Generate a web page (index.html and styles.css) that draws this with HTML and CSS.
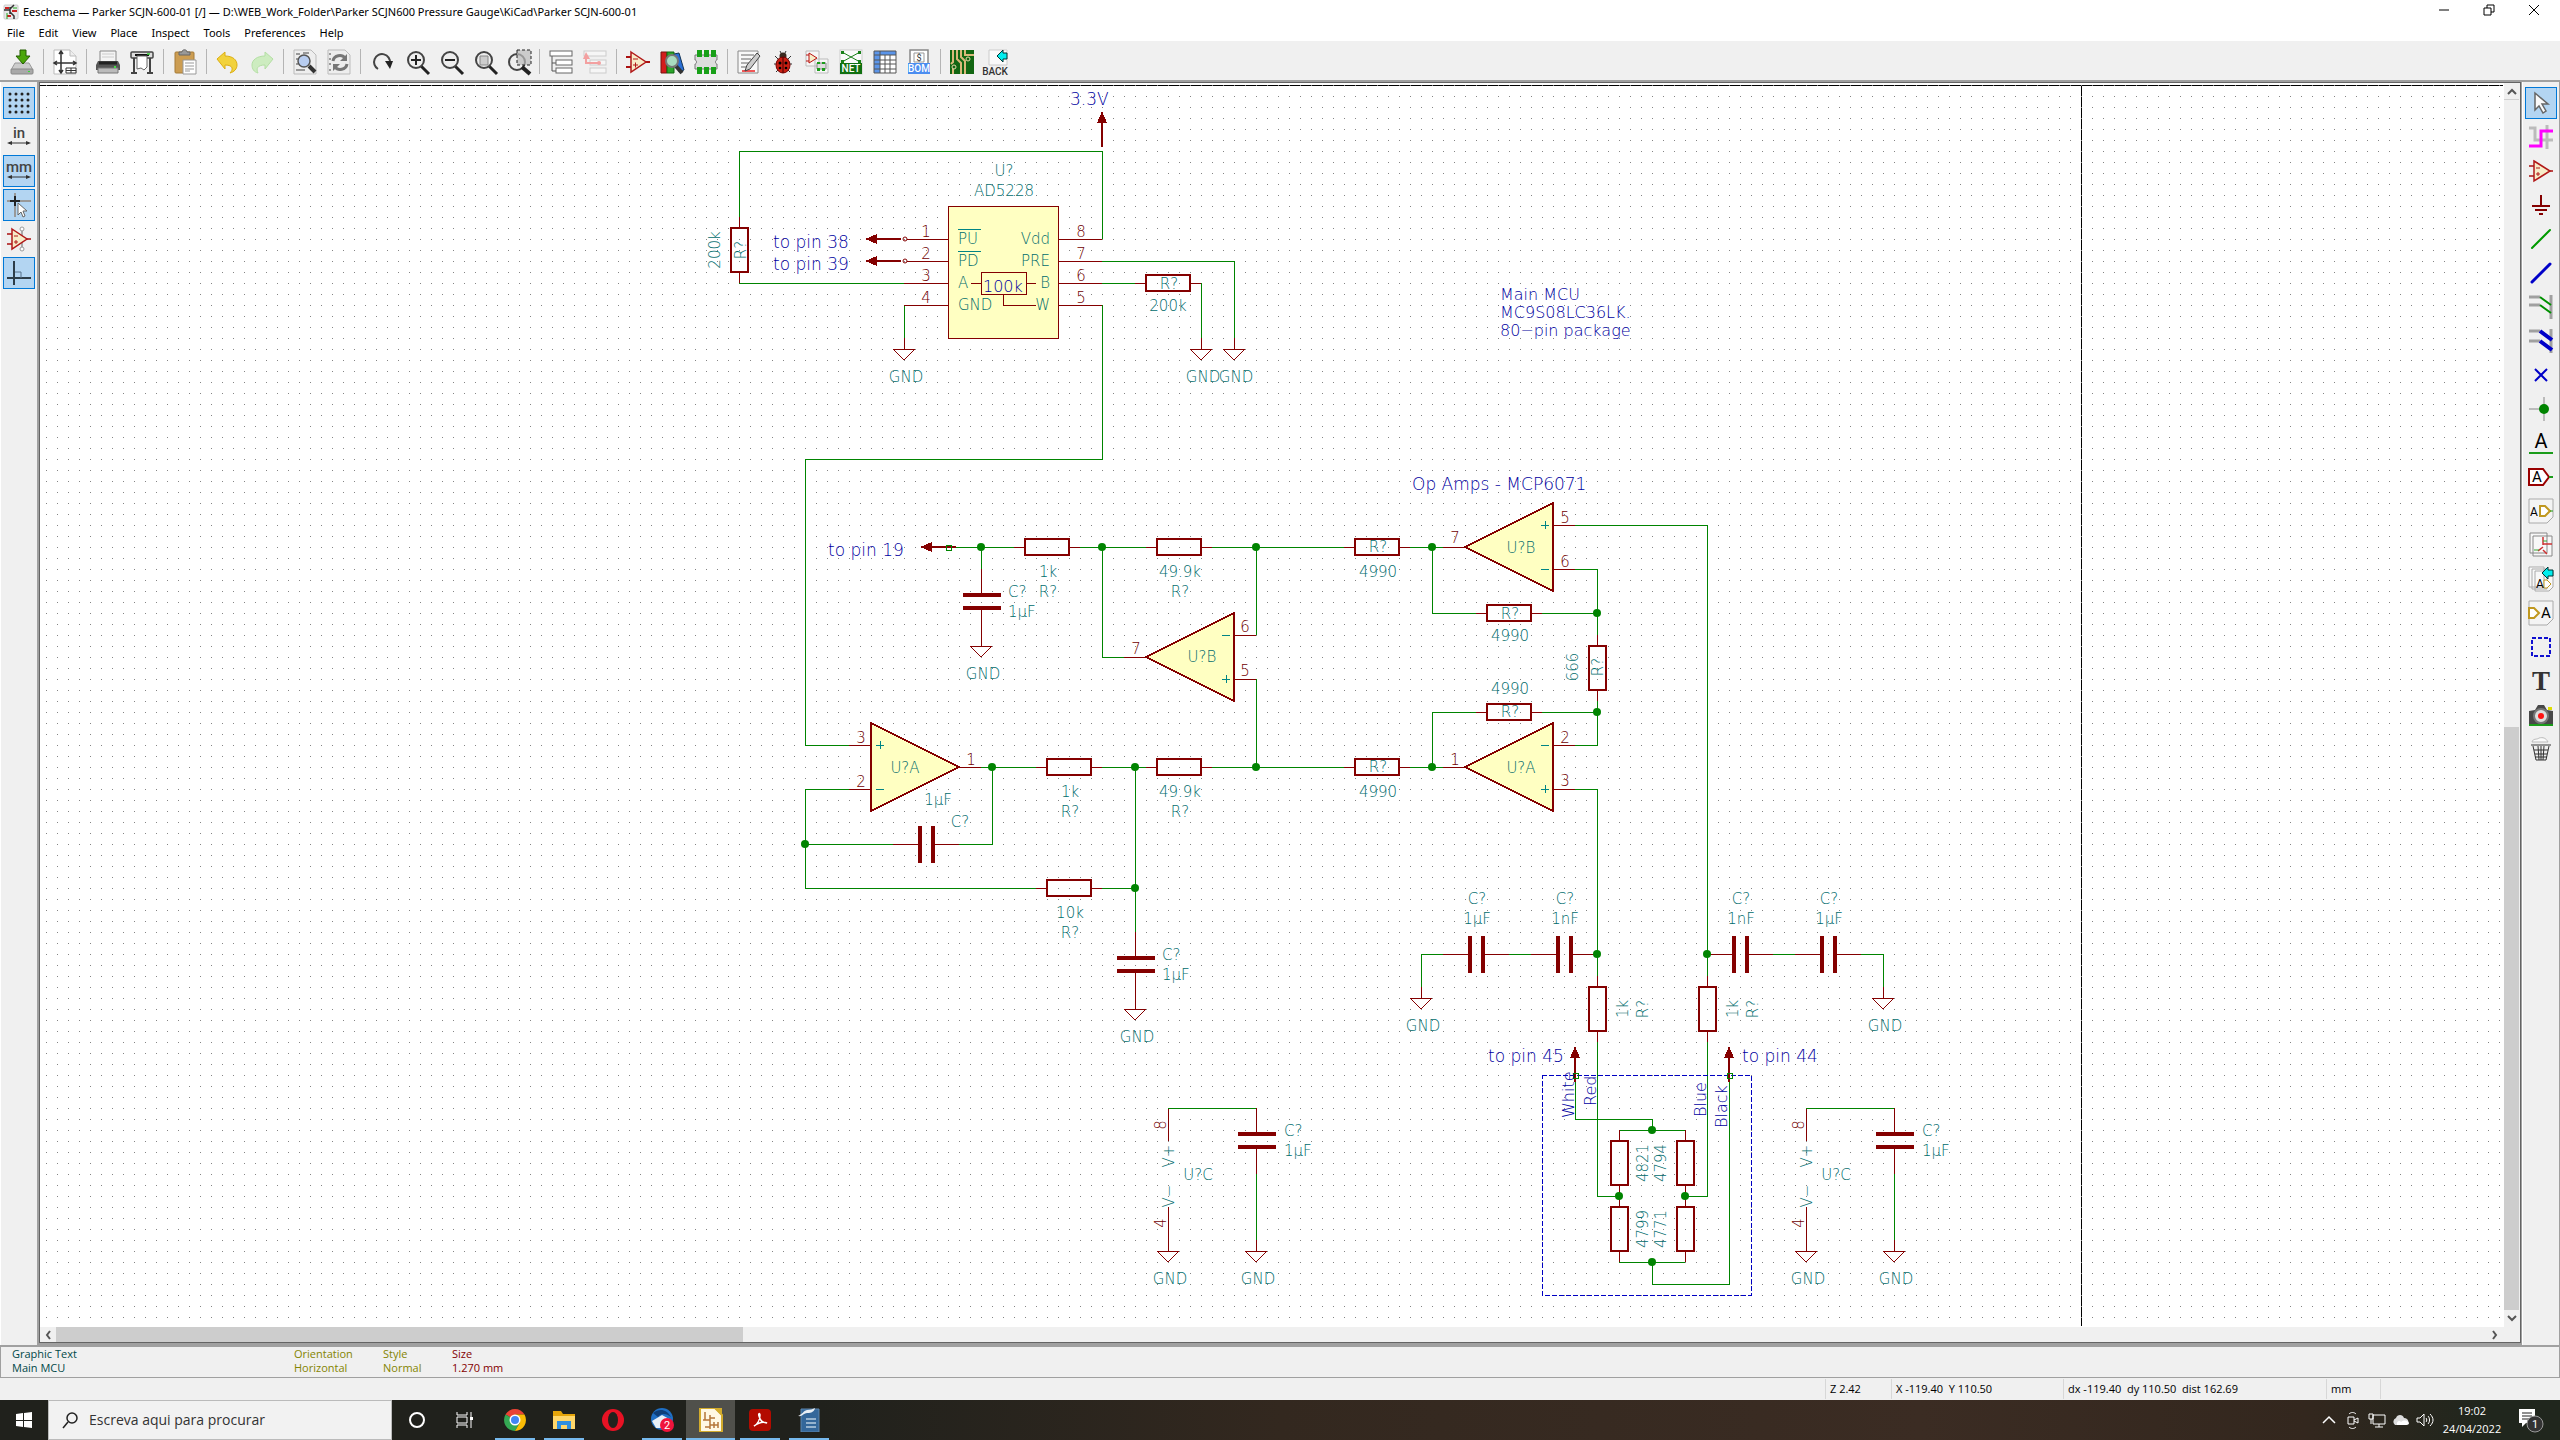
FILE: index.html
```
<!DOCTYPE html>
<html lang="en">
<head>
<meta charset="utf-8">
<title>Eeschema — Parker SCJN-600-01</title>
<link rel="stylesheet" href="styles.css">
</head>
<body>
<header class="titlebar">
  <svg class="app-icon" viewBox="0 0 16 16"><rect x="1" y="1" width="14" height="14" rx="1" fill="#e8e8e8" stroke="#ccc"/><path d="M1 6h6M7 3v7M7 8l4 4v3M7 5l4-4" stroke="#333" fill="none" stroke-width="1.5"/><path d="M2 4h4M9 7h5M4 12h4" stroke="#c22" stroke-width="2"/><path d="M10 4h4M4 9v6" stroke="#2a2"/></svg>
  <h1 class="title">Eeschema — Parker SCJN-600-01 [/] — D:\WEB_Work_Folder\Parker SCJN600 Pressure Gauge\KiCad\Parker SCJN-600-01</h1>
  <div class="window-controls">
    <button aria-label="Minimize"><svg viewBox="0 0 12 12"><path d="M1 6h10" stroke="#000"/></svg></button>
    <button aria-label="Restore"><svg viewBox="0 0 12 12"><path d="M1 4h7v7H1zM4 4V1h7v7H8" fill="none" stroke="#000"/></svg></button>
    <button aria-label="Close"><svg viewBox="0 0 12 12"><path d="M1 1l10 10M11 1L1 11" stroke="#000"/></svg></button>
  </div>
</header>
<nav class="menubar">
  <button>File</button><button>Edit</button><button>View</button><button>Place</button><button>Inspect</button><button>Tools</button><button>Preferences</button><button>Help</button>
</nav>

<div class="toolbar" role="toolbar" aria-label="Main">
  <button aria-label="Save"><svg viewBox="0 0 24 24"><path d="M5 13h14l4 7H1z" fill="#ccc" stroke="#999"/><rect x="1" y="19" width="22" height="5" rx="1" fill="#a9a9a9" stroke="#888"/><path d="M18 21.500h2" stroke="#3d3"/><path d="M10 0h6v6h4l-7 8-7-8h4z" fill="#4ba60a" stroke="#245c00"/></svg></button>
  <i class="sep"></i>
  <button aria-label="Page settings"><svg viewBox="0 0 24 24"><path d="M1 0h16l6 6v18H1z" fill="#fff" stroke="#bbb"/><path d="M17 0v6h6" fill="#eee" stroke="#bbb"/><path d="M8 2v20M2 13h20M6 4l2-3 2 3M6 20l2 3 2-3M4 11l-3 2 3 2M20 11l3 2-3 2" fill="none" stroke="#333" stroke-width="1.500"/><path d="M13 18h10v5H13zM13 20.500h10M18 18v5" fill="#fff" stroke="#333"/></svg></button>
  <i class="sep"></i>
  <button aria-label="Print"><svg viewBox="0 0 24 24"><path d="M4 1h16v12H4z" fill="#f4f4f4" stroke="#888"/><path d="M6 4h12M6 7h12" stroke="#ccc"/><path d="M2 11h20l2 4v5H0v-5z" fill="#555"/><path d="M3 13h18" stroke="#222" stroke-width="3"/><path d="M2 18h20v5H2z" fill="#bbb" stroke="#777"/><path d="M18 17h2" stroke="#4d4" stroke-width="2"/></svg></button>
  <button aria-label="Plot"><svg viewBox="0 0 24 24"><rect x="1" y="2" width="22" height="6" rx="1" fill="#ddd" stroke="#444" stroke-width="1.500"/><path d="M5 5h14" stroke="#111" stroke-width="2"/><path d="M4 8v15M20 8v15M1 23h6M17 23h6" stroke="#444" stroke-width="2"/><path d="M7 6h10v11l-3 3-3-2-4 1z" fill="#fff" stroke="#666"/><path d="M17 4h3" stroke="#3c3" stroke-width="1.500"/></svg></button>
  <i class="sep"></i>
  <button aria-label="Paste"><svg viewBox="0 0 24 24"><rect x="2" y="2" width="19" height="21" rx="1" fill="#cc9d52" stroke="#a57b36"/><path d="M6 5h11V2h-3c0-3-5-3-5 0H6z" fill="#999" stroke="#666"/><path d="M10 10h13v14H10z" fill="#fff" stroke="#999"/><path d="M12 13h9M12 16h9M12 19h9M12 21h5" stroke="#999"/></svg></button>
  <i class="sep"></i>
  <button aria-label="Undo"><svg viewBox="0 0 24 24"><path d="M1 9l8-7v4c8 0 12 4 12 9 0 4-3 7-7 8 3-3 4-8-5-8v4z" fill="#f2d23c" stroke="#dbae13"/></svg></button>
  <button aria-label="Redo"><svg viewBox="0 0 24 24"><path d="M23 9l-8-7v4C7 6 2 10 2 15c0 4 2 7 6 8-2-4-1-8 7-8v4z" fill="#cdecc0" stroke="#b4dfa4"/></svg></button>
  <i class="sep"></i>
  <button aria-label="Find"><svg viewBox="0 0 24 24"><path d="M1 0h17l5 5v19H1z" fill="#eee" stroke="#bbb"/><path d="M3 4h4M3 9h2M3 14h2M3 20h9M10 3h6" stroke="#999" stroke-width="2"/><path d="M16 16l6 6" stroke="#333" stroke-width="4"/><circle cx="11" cy="11" r="6" fill="#b8cdf0" stroke="#555" stroke-width="1.500"/></svg></button>
  <button aria-label="Find and replace"><svg viewBox="0 0 24 24"><path d="M1 0h17l5 5v19H1z" fill="#eee" stroke="#bbb"/><path d="M2 4h2M2 9h2M2 14h2M2 20h2" stroke="#999" stroke-width="2"/><path d="M6 11c1-6 9-7 12-3M20 14c-1 6-9 7-12 3" fill="none" stroke="#777" stroke-width="3"/><path d="M20 4v7h-7zM6 21v-7h7z" fill="#777"/></svg></button>
  <i class="sep"></i>
  <button aria-label="Refresh"><svg viewBox="0 0 24 24"><path d="M8 19A8 8 0 1 1 20 13" fill="none" stroke="#444" stroke-width="2"/><path d="M15 11h8l-3 8z" fill="#222"/></svg></button>
  <button aria-label="Zoom in"><svg viewBox="-2 0 24 24"><path d="M15 16l8 8" stroke="#222" stroke-width="3"/><circle cx="10" cy="10" r="8" fill="#eee" stroke="#444" stroke-width="2"/><path d="M5 10h10M10 5v10" stroke="#222" stroke-width="2"/></svg></button>
  <button aria-label="Zoom out"><svg viewBox="-2 0 24 24"><path d="M15 16l8 8" stroke="#222" stroke-width="3"/><circle cx="10" cy="10" r="8" fill="#eee" stroke="#444" stroke-width="2"/><path d="M5 10h10" stroke="#222" stroke-width="2"/></svg></button>
  <button aria-label="Zoom to fit"><svg viewBox="-2 0 24 24"><path d="M15 16l8 8" stroke="#222" stroke-width="3"/><circle cx="10" cy="10" r="8" fill="#eee" stroke="#444" stroke-width="2"/><path d="M6 6h8v9H6z" fill="#ccc" stroke="#888"/></svg></button>
  <button aria-label="Zoom to selection"><svg viewBox="-3 0 24 24"><circle cx="8" cy="12" r="8" fill="#eee" stroke="#444" stroke-width="2"/><path d="M8 0h14v15H8z" fill="#bbb" fill-opacity="0.7" stroke="#222" stroke-dasharray="3 2"/><path d="M13 17l8 7" stroke="#222" stroke-width="4"/></svg></button>
  <i class="sep"></i>
  <button aria-label="Hierarchy"><svg viewBox="0 0 24 24"><path d="M3 6v15h4M3 13h4" fill="none" stroke="#555"/><g fill="#fff" stroke="#666"><rect x="1" y="1" width="22" height="5"/><rect x="7" y="10" width="16" height="5"/><rect x="7" y="18" width="16" height="5"/></g></svg></button>
  <button aria-label="Leave sheet"><svg viewBox="0 0 24 24"><g fill="#f6f6f6" stroke="#ccc"><rect x="1" y="1" width="22" height="5"/><rect x="7" y="10" width="16" height="5"/><rect x="7" y="18" width="16" height="5"/></g><path d="M16 13H3V6" fill="none" stroke="#f3a0a0" stroke-width="2"/><path d="M0 9l3-7 4 7z" fill="#f3a0a0"/><circle cx="16" cy="13" r="2" fill="#f3a0a0"/></svg></button>
  <i class="sep"></i>
  <button aria-label="Symbol editor"><svg viewBox="0 0 24 24"><path d="M0 7h5M0 17h5M19 12h5" stroke="#a11" stroke-width="2"/><path d="M5 2l15 10L5 22z" fill="#f7ecc8" stroke="#b11818" stroke-width="1.500"/><path d="M7 9h5M7 15h5M9.500 12.500v5" stroke="#b11818"/></svg></button>
  <button aria-label="Symbol libraries"><svg viewBox="0 0 24 24"><path d="M1 2h6v21H1z" fill="#d31c1c" stroke="#711"/><path d="M7 2h7v21H7z" fill="#2ba52b" stroke="#161"/><path d="M14 4l5-1 5 17-5 2z" fill="#2a6fd6" stroke="#135"/><path d="M15 15l7 8" stroke="#333" stroke-width="4"/><circle cx="12" cy="11" r="6" fill="#a9dcc0" stroke="#777" stroke-width="2"/></svg></button>
  <button aria-label="Footprint editor"><svg viewBox="0 0 24 24"><path d="M1 5h22v5c-2 0-2 4 0 4v5H1v-5c2 0 2-4 0-4z" fill="#ddd" stroke="#777"/><g fill="#18a018"><path d="M3 0h5v7H3zM10 0h5v7h-5zM17 0h5v7h-5zM3 17h5v7H3zM10 17h5v7h-5zM17 17h5v7h-5z"/></g></svg></button>
  <i class="sep"></i>
  <button aria-label="Annotate"><svg viewBox="0 0 24 24"><path d="M1 1h20v22H1z" fill="#f8f8f8" stroke="#888"/><path d="M4 5h13M4 9h10M4 13h8M4 17h5" stroke="#666"/><path d="M5 21h13" stroke="#e22" stroke-width="1.500"/><path d="M20 3l3 3-10 13-5 2 2-6z" fill="#ccc" stroke="#444"/></svg></button>
  <button aria-label="Electrical rules check"><svg viewBox="0 0 24 24"><path d="M4 6l4 4M20 6l-4 4M3 14h5M21 14h-5M5 22l4-4M19 22l-4-4M9 1l2 4M15 1l-2 4" stroke="#333"/><circle cx="12" cy="6" r="3.500" fill="#3a2a20"/><ellipse cx="12" cy="15" rx="7" ry="8" fill="#c81e12" stroke="#700"/><path d="M12 7v16" stroke="#400"/><circle cx="9" cy="13" r="1.500"/><circle cx="15" cy="13" r="1.500"/><circle cx="9" cy="18" r="1.300"/><circle cx="15" cy="18" r="1.300"/></svg></button>
  <button aria-label="Assign footprints"><svg viewBox="0 0 24 24"><path d="M1 1h13v15H1zM10 9h13v14H10z" fill="#f6f6f6" stroke="#bbb"/><path d="M4 3l8 5-8 5z" fill="#f7ecc8" stroke="#b11"/><path d="M1 5h3M1 11h3" stroke="#b11"/><path d="M12 13h9v6h-9z" fill="#ddd" stroke="#888"/><path d="M12 12h3v2h-3zM17 12h3v2h-3zM12 18h3v3h-3zM17 18h3v3h-3z" fill="#1a9c1a"/></svg></button>
  <button aria-label="Netlist"><svg viewBox="0 0 24 24"><rect x="1" y="0" width="22" height="24" fill="#fafafa" stroke="#ccc"/><path d="M3 2l18 10M21 2L3 12" stroke="#188018"/><path d="M2 1h3v3H2zM19 1h3v3h-3zM2 10h3v3H2zM19 10h3v3h-3z" fill="#188018"/><rect x="1" y="13" width="22" height="11" fill="#107010"/><text x="12" y="22" class="net-label">NET</text></svg></button>
  <button aria-label="Symbol fields"><svg viewBox="0 0 24 24"><rect x="1" y="1" width="22" height="22" fill="#fff"/><path d="M1 1h22v4H1zM1 1h6v22H1z" fill="#5b95ea"/><path d="M1 1h22v22H1zM1 5h22M1 10h22M1 14h22M1 19h22M7 1v22M12 5v18M17 5v18" fill="none" stroke="#555"/></svg></button>
  <button aria-label="Bill of materials"><svg viewBox="0 0 24 24"><path d="M3 0h18v14H3z" fill="#fff" stroke="#888" stroke-width="1.500"/><path d="M7 3h10v9H7z" fill="none" stroke="#999"/><text x="12" y="11" class="dollar">$</text><rect x="1" y="13" width="22" height="11" fill="#4b8df0"/><text x="12" y="22" class="net-label">BOM</text></svg></button>
  <i class="sep"></i>
  <button aria-label="Open PCB"><svg viewBox="0 0 24 24"><rect width="24" height="24" fill="#126612"/><path d="M3 0v12l-2 2M7 0v9l4 4v11M11 0v7l4 4v13M15 0v5h9M3 24v-6" fill="none" stroke="#d9b97a" stroke-width="2"/><circle cx="18" cy="9" r="2" fill="#126612" stroke="#e8d9a8"/><circle cx="4" cy="17" r="2" fill="#126612" stroke="#e8d9a8"/></svg></button>
  <button aria-label="Back import"><svg viewBox="0 0 24 24"><path d="M5 0h18v15H5z" fill="#fafafa" stroke="#ccc"/><path d="M13 6l6-6v3h4v6h-4v3z" fill="#0ee" stroke="#033"/><text x="11" y="25" class="back-label">BACK</text></svg></button>
</div>

<main class="workspace">
  <div class="side side-left" role="toolbar" aria-label="Options">
    <button class="on" aria-label="Grid"><svg viewBox="0 0 24 24"><path d="M3 3h20M3 9h20M3 15h20M3 21h20" stroke="#222" stroke-width="3" stroke-dasharray="0 6" stroke-linecap="round"/></svg></button>
    <button aria-label="Inches"><svg viewBox="0 0 24 24"><text x="12" y="13" class="unit">in</text><path d="M2 18h20" stroke="#333"/><path d="M0 18l5-2v4zM24 18l-5-2v4z" fill="#333"/></svg></button>
    <button class="on" aria-label="Millimeters"><svg viewBox="0 0 24 24"><text x="12" y="13" class="unit">mm</text><path d="M2 18h20" stroke="#333"/><path d="M0 18l5-2v4zM24 18l-5-2v4z" fill="#333"/></svg></button>
    <button class="on" aria-label="Cursor shape"><svg viewBox="0 0 24 24"><path d="M0 8h24M8 0v24" stroke="#999" stroke-width="2"/><path d="M3 8h10M8 3v10" stroke="#222" stroke-width="2"/><path d="M11 10v12l3-3 2 5 2-1-2-5h4z" fill="#fff" stroke="#666"/></svg></button>
    <button aria-label="Hidden pins"><svg viewBox="0 0 24 24"><path d="M15 2v20" stroke="#aaa" stroke-width="2"/><circle cx="15" cy="2" r="2" fill="#fff" stroke="#999"/><circle cx="15" cy="22" r="2" fill="#fff" stroke="#999"/><path d="M0 7h5M0 17h5M19 12h5" stroke="#a11" stroke-width="1.500"/><path d="M5 2l15 10L5 22z" fill="#f7ecc8" stroke="#b11818" stroke-width="1.500"/><path d="M7 9h4M7 15h4M9 13v4" stroke="#b11818"/></svg></button>
    <button class="on" aria-label="Orthogonal lines"><svg viewBox="0 0 24 24"><path d="M7 0v24M0 17h24" stroke="#2d3d49" stroke-width="2"/><path d="M8 11h6v6" fill="none" stroke="#56718a"/></svg></button>
  </div>

  <div class="frame">
    <div class="view">
      <svg class="schematic" role="img" aria-label="Schematic sheet">
        <defs>
          <pattern id="grid" x="46" y="96" width="11" height="11" patternUnits="userSpaceOnUse"><rect width="1" height="1" fill="#848484"/></pattern>
          <g id="r"><path class="pin" d="M0 0h11M55 0h11"/><rect class="body" x="11" y="-8" width="44" height="16"/></g>
          <g id="rv"><path class="pin" d="M0 0v11M0 55v11"/><rect class="body" x="-8" y="11" width="17" height="44"/></g>
          <g id="c"><path class="pin" d="M0 0h26M40 0h26"/><path class="plate" d="M27 -18v37M40 -18v37"/></g>
          <g id="cv"><path class="pin" d="M0 0v26M0 40v26"/><path class="plate" d="M-18 26h38M-18 39h38"/></g>
          <g id="gnd"><path class="pin" d="M0 0v11M-11 11h22l-11 11z"/><text class="f" x="2" y="44">GND</text></g>
          <g id="amp"><path class="pin" d="M0 0h22M110 -22h22M110 22h22"/><path class="chip heavy" d="M22 0l88 -44v88z"/></g>
          <g id="arrow"><path class="shaft" d="M0 8v28"/><path class="head" d="M0 0l5 12h-10z"/></g>
          <g id="supply">
            <path class="pin" d="M0 0v33M0 99v33"/><path class="wire" d="M0 0h88M88 66v66"/>
            <use href="#cv" x="88"/><use href="#gnd" y="132"/><use href="#gnd" x="88" y="132"/>
            <text class="n" transform="translate(-2 17) rotate(-90)">8</text>
            <text class="n" transform="translate(-2 115) rotate(-90)">4</text>
            <text class="f" transform="translate(6 48) rotate(-90)">V+</text>
            <text class="f" transform="translate(6 88) rotate(-90)">V−</text>
            <text class="f" x="30" y="72">U?C</text>
            <text class="f s" x="116" y="28">C?</text><text class="f s" x="116" y="48">1µF</text>
          </g>
        </defs>
        <g transform="translate(-40 -83)">
          <path class="sheet" d="M40 85H2503M2081 85V1326"/>
          <rect x="40" y="84" width="100%" height="100%" fill="url(#grid)"/>

          <g class="wire">
            <path d="M739 217V151H1102V239M739 283H904M904 305V338M1102 261H1234V338M1102 283H1135M1201 283V338M1102 305V459H805V745H849"/>
            <path d="M948 547H1014M1080 547H1146M1212 547H1344M981 547V569M1102 547V657H1124M1256 547V635M1256 679V767"/>
            <path d="M981 767H1036M1102 767H1146M1212 767H1344M992 767V844H959M893 844H805M849 789H805V888H1036M1102 888H1135M1135 767V932"/>
            <path d="M1410 547H1443M1432 547V613H1476M1542 613H1597M1575 569H1597V635M1597 701V745H1575M1542 712H1597M1476 712H1432V767M1410 767H1443"/>
            <path d="M1575 525H1707V976M1575 789H1597V976M1509 954H1531M1443 954H1421V987M1773 954H1795M1861 954H1883V987"/>
            <path d="M1597 1042V1196H1619M1707 1042V1196H1685M1575 1075V1119H1652V1130M1619 1130H1685M1619 1262H1685M1652 1262V1284H1729V1075"/>
          </g>

          <rect class="chip" x="948" y="206" width="110" height="132"/>
          <path class="pin" d="M907 239H948M907 261H948M904 283H948M904 305H948M1058 239H1102M1058 261H1102M1058 283H1102M1058 305H1102"/>
          <path class="pin" d="M971 283H981M1026 283H1036M981 272H1026V294H981zM1003 294V305H1036"/>
          <circle class="pin" cx="905" cy="239" r="2"/><circle class="pin" cx="905" cy="261" r="2"/>

          <use href="#rv" x="739" y="217"/><use href="#r" x="1135" y="283"/>
          <use href="#r" x="1014" y="547"/><use href="#r" x="1146" y="547"/><use href="#r" x="1344" y="547"/>
          <use href="#r" x="1036" y="767"/><use href="#r" x="1146" y="767"/><use href="#r" x="1344" y="767"/>
          <use href="#r" x="1036" y="888"/><use href="#r" x="1476" y="613"/><use href="#r" x="1476" y="712"/>
          <use href="#rv" x="1597" y="635"/><use href="#rv" x="1597" y="976"/><use href="#rv" x="1707" y="976"/>
          <use href="#rv" x="1619" y="1130"/><use href="#rv" x="1619" y="1196"/><use href="#rv" x="1685" y="1130"/><use href="#rv" x="1685" y="1196"/>
          <use href="#c" x="893" y="844"/><use href="#c" x="1443" y="954"/><use href="#c" x="1531" y="954"/><use href="#c" x="1707" y="954"/><use href="#c" x="1795" y="954"/>
          <use href="#cv" x="981" y="569"/><use href="#cv" x="1135" y="932"/>
          <use href="#gnd" x="904" y="338"/><use href="#gnd" x="1201" y="338"/><use href="#gnd" x="1234" y="338"/>
          <use href="#gnd" x="981" y="635"/><use href="#gnd" x="1135" y="998"/><use href="#gnd" x="1421" y="987"/><use href="#gnd" x="1883" y="987"/>
          <use href="#supply" x="1168" y="1108"/><use href="#supply" x="1806" y="1108"/>
          <use href="#amp" x="1124" y="657"/><use href="#amp" x="1443" y="547"/><use href="#amp" x="1443" y="767"/>
          <use href="#amp" transform="translate(981 767) rotate(180)"/>

          <g class="dot">
            <circle cx="981" cy="547" r="4"/><circle cx="1102" cy="547" r="4"/><circle cx="1256" cy="547" r="4"/><circle cx="1432" cy="547" r="4"/>
            <circle cx="992" cy="767" r="4"/><circle cx="1135" cy="767" r="4"/><circle cx="1256" cy="767" r="4"/><circle cx="1432" cy="767" r="4"/>
            <circle cx="805" cy="844" r="4"/><circle cx="1135" cy="888" r="4"/><circle cx="1597" cy="613" r="4"/><circle cx="1597" cy="712" r="4"/>
            <circle cx="1597" cy="954" r="4"/><circle cx="1707" cy="954" r="4"/><circle cx="1652" cy="1130" r="4"/><circle cx="1652" cy="1262" r="4"/>
            <circle cx="1619" cy="1196" r="4"/><circle cx="1685" cy="1196" r="4"/>
          </g>

          <rect class="dashed" x="1542" y="1075" width="209" height="220"/>
          <use href="#arrow" x="1102" y="111"/><use href="#arrow" x="1575" y="1046"/><use href="#arrow" x="1729" y="1046"/>
          <use href="#arrow" transform="translate(865 239) rotate(-90)"/><use href="#arrow" transform="translate(865 261) rotate(-90)"/><use href="#arrow" transform="translate(920 547) rotate(-90)"/>
          <path class="wire" d="M946 545h5v5h-5zM1573 1073h5v5h-5zM1727 1073h5v5h-5z"/>

          <g class="n">
            <text x="926" y="237">1</text><text x="926" y="259">2</text><text x="926" y="281">3</text><text x="926" y="303">4</text>
            <text x="1081" y="237">8</text><text x="1081" y="259">7</text><text x="1081" y="281">6</text><text x="1081" y="303">5</text>
            <text x="861" y="743">3</text><text x="861" y="787">2</text><text x="971" y="765">1</text>
            <text x="1136" y="654">7</text><text x="1245" y="632">6</text><text x="1245" y="676">5</text>
            <text x="1455" y="543">7</text><text x="1565" y="523">5</text><text x="1565" y="567">6</text>
            <text x="1455" y="765">1</text><text x="1565" y="743">2</text><text x="1565" y="786">3</text>
          </g>
          <path class="mark" d="M958 229h23M958 251h23M876 745h8M880 741v8M876 789h8M1222 635h8M1222 679h8M1226 675v8M1541 525h8M1545 521v8M1541 569h8M1541 745h8M1541 789h8M1545 785v8"/>
          <g class="f">
            <text x="1004" y="176">U?</text><text x="1004" y="196">AD5228</text>
            <text class="s" x="958" y="244">PU</text><text class="s" x="958" y="266">PD</text><text class="s" x="958" y="288">A</text><text class="s" x="958" y="310">GND</text>
            <text class="e" x="1050" y="244">Vdd</text><text class="e" x="1050" y="266">PRE</text><text class="e" x="1050" y="288">B</text><text class="e" x="1050" y="310">W</text>
            <text transform="translate(720 250) rotate(-90)">200k</text><text transform="translate(746 250) rotate(-90)">R?</text>
            <text x="1169" y="289">R?</text><text x="1168" y="311">200k</text>
            <text x="1048" y="577">1k</text><text x="1048" y="597">R?</text><text x="1180" y="577">49.9k</text><text x="1180" y="597">R?</text>
            <text class="s" x="1008" y="597">C?</text><text class="s" x="1008" y="617">1µF</text>
            <text x="1202" y="662">U?B</text><text x="905" y="773">U?A</text><text x="938" y="805">1µF</text><text x="960" y="827">C?</text>
            <text x="1070" y="797">1k</text><text x="1070" y="817">R?</text><text x="1180" y="797">49.9k</text><text x="1180" y="817">R?</text>
            <text x="1070" y="918">10k</text><text x="1070" y="938">R?</text><text class="s" x="1162" y="960">C?</text><text class="s" x="1162" y="980">1µF</text>
            <text x="1378" y="552">R?</text><text x="1378" y="577">4990</text><text x="1378" y="772">R?</text><text x="1378" y="797">4990</text>
            <text x="1521" y="553">U?B</text><text x="1521" y="773">U?A</text>
            <text x="1510" y="619">R?</text><text x="1510" y="641">4990</text><text x="1510" y="717">R?</text><text x="1510" y="694">4990</text>
            <text transform="translate(1578 667) rotate(-90)">666</text><text transform="translate(1603 667) rotate(-90)">R?</text>
            <text x="1477" y="904">C?</text><text x="1477" y="924">1µF</text><text x="1565" y="904">C?</text><text x="1565" y="924">1nF</text>
            <text x="1741" y="904">C?</text><text x="1741" y="924">1nF</text><text x="1829" y="904">C?</text><text x="1829" y="924">1µF</text>
            <text transform="translate(1628 1009) rotate(-90)">1k</text><text transform="translate(1648 1009) rotate(-90)">R?</text>
            <text transform="translate(1738 1009) rotate(-90)">1k</text><text transform="translate(1758 1009) rotate(-90)">R?</text>
            <text transform="translate(1648 1163) rotate(-90)">4821</text><text transform="translate(1666 1163) rotate(-90)">4794</text>
            <text transform="translate(1648 1229) rotate(-90)">4799</text><text transform="translate(1666 1229) rotate(-90)">4771</text>
          </g>
          <g class="note">
            <text x="1070" y="105">3.3V</text><text x="773" y="248">to pin 38</text><text x="773" y="270">to pin 39</text>
            <text x="828" y="556">to pin 19</text><text x="1488" y="1062">to pin 45</text><text x="1742" y="1062">to pin 44</text>
            <text x="1412" y="490">Op Amps - MCP6071</text>
          </g>
          <g class="note small">
            <text x="983" y="292">100k</text>
            <text x="1500" y="300">Main MCU</text><text x="1500" y="318">MC9S08LC36LK.</text><text x="1500" y="336">80−pin package</text>
            <text transform="translate(1574 1118) rotate(-90)">White</text><text transform="translate(1596 1106) rotate(-90)">Red</text>
            <text transform="translate(1706 1117) rotate(-90)">Blue</text><text transform="translate(1727 1128) rotate(-90)">Black</text>
          </g>
        </g>
      </svg>
      <div class="vscroll">
        <button aria-label="Scroll up"><svg viewBox="0 0 15 15"><path d="M4 10l4-4 4 4" fill="none" stroke="#555" stroke-width="2"/></svg></button>
        <div class="vtrack"></div><div class="vthumb"></div>
        <button aria-label="Scroll down"><svg viewBox="0 0 15 15"><path d="M4 5l4 4 4-4" fill="none" stroke="#555" stroke-width="2"/></svg></button>
      </div>
      <div class="hscroll">
        <button aria-label="Scroll left"><svg viewBox="0 0 15 15"><path d="M10 4l-3 4 3 4" fill="none" stroke="#555" stroke-width="2"/></svg></button>
        <div class="hthumb"></div><div class="htrack"></div>
        <button aria-label="Scroll right"><svg viewBox="0 0 15 15"><path d="M5 4l3 4-3 4" fill="none" stroke="#555" stroke-width="2"/></svg></button>
      </div>
      <div class="corner"></div>
    </div>
  </div>

  <div class="side side-right" role="toolbar" aria-label="Tools">
    <button class="on" aria-label="Select"><svg viewBox="0 0 24 24"><path d="M6 2v17l4-4 4 7 3-2-4-7h6z" fill="#fafafa" stroke="#666" stroke-width="1.500"/></svg></button>
    <button aria-label="Highlight net"><svg viewBox="0 0 24 24"><path d="M0 3h6v12h18M18 0v24" fill="none" stroke="#bbb" stroke-width="3"/><path d="M0 21h12V6h12" fill="none" stroke="#f0f" stroke-width="3"/></svg></button>
    <button aria-label="Place symbol"><svg viewBox="0 0 24 24"><path d="M0 7h5M0 17h5M19 12h5" stroke="#a11" stroke-width="1.500"/><path d="M5 2l16 10L5 22z" fill="#f7ecc8" stroke="#b11818" stroke-width="1.500"/><path d="M7 9h4M7 15h4M9 13v4" stroke="#b11818"/></svg></button>
    <button aria-label="Place power port"><svg viewBox="0 0 24 24"><path d="M12 2v10M3 13h18M6 17h12M10 21h4" stroke="#840000" stroke-width="2"/></svg></button>
    <button aria-label="Place wire"><svg viewBox="0 0 24 24"><path d="M3 21L21 3" stroke="#009a00" stroke-width="2" stroke-linecap="round"/></svg></button>
    <button aria-label="Place bus"><svg viewBox="0 0 24 24"><path d="M3 21L21 3" stroke="#0000c8" stroke-width="3" stroke-linecap="round"/></svg></button>
    <button aria-label="Wire to bus entry"><svg viewBox="0 0 24 24"><path d="M0 2h11M0 10h11M22 0v24" stroke="#a0a0a0" stroke-width="3"/><path d="M11 2l11 8M11 10l11 8" stroke="#009000" stroke-width="2"/></svg></button>
    <button aria-label="Bus to bus entry"><svg viewBox="0 0 24 24"><path d="M0 2h11M0 12h11M22 0v24" stroke="#a0a0a0" stroke-width="3"/><path d="M11 2l12 9M11 12l12 9" stroke="#0000c8" stroke-width="4"/></svg></button>
    <button aria-label="No connect"><svg viewBox="0 0 24 24"><path d="M6 6l12 12M18 6L6 18" stroke="#0000c8" stroke-width="2"/></svg></button>
    <button aria-label="Junction"><svg viewBox="0 0 24 24"><path d="M0 12h15M15 0v24" stroke="#bbb" stroke-width="2"/><circle cx="15" cy="12" r="5" fill="#008400"/></svg></button>
    <button aria-label="Net label"><svg viewBox="0 0 24 24"><text x="12" y="17" class="glyph big">A</text><path d="M0 22h24" stroke="#1a9c1a" stroke-width="2"/></svg></button>
    <button aria-label="Global label"><svg viewBox="0 0 24 24"><path d="M0 4h14l6 8-6 8H0z" fill="#fff" stroke="#900" stroke-width="2"/><path d="M20 12h4" stroke="#1a9c1a" stroke-width="2"/><text x="8" y="17" class="glyph">A</text></svg></button>
    <button aria-label="Hierarchical label"><svg viewBox="0 0 24 24"><path d="M0 0h24v18l-6 6H0z" fill="#f4f4f4" stroke="#aaa"/><path d="M11 7h5l5 5-5 5h-5z" fill="#fff" stroke="#c09820" stroke-width="2"/><path d="M21 12h3" stroke="#1a9c1a"/><text x="5" y="17" class="glyph narrow">A</text></svg></button>
    <button aria-label="Hierarchical sheet"><svg viewBox="0 0 24 24"><path d="M1 0h17v20H1zM4 3h19v20H4z" fill="#f8f8f8" stroke="#888"/><path d="M14 4v8M14 11h9M9 18l5-4M14 17l4 4" stroke="#c33" stroke-width="1.500"/><path d="M5 17h5M14 8h4" stroke="#3a3"/></svg></button>
    <button aria-label="Import sheet pin"><svg viewBox="0 0 24 24"><path d="M0 0h15v20H0zM3 2h15v20H3zM6 4h18v16l-4 4H6z" fill="#f8f8f8" stroke="#aaa"/><path d="M13 6l6-6v3h5v6h-5v3z" fill="#0ee" stroke="#033"/><path d="M15 13h3l4 4-4 4h-3z" fill="#fff" stroke="#c09820"/><text x="11" y="21" class="glyph narrow">A</text></svg></button>
    <button aria-label="Sheet pin"><svg viewBox="0 0 24 24"><path d="M0 0h24v18l-6 6H0z" fill="#f4f4f4" stroke="#aaa"/><path d="M0 7h5l5 5-5 5H0z" fill="#fff" stroke="#c09820" stroke-width="2"/><text x="17" y="17" class="glyph">A</text></svg></button>
    <button aria-label="Graphic line"><svg viewBox="0 0 24 24"><path d="M3 3h18v18H3z" fill="none" stroke="#1010d0" stroke-width="2" stroke-dasharray="4 2"/></svg></button>
    <button aria-label="Text"><svg viewBox="0 0 24 24"><text x="12" y="21" class="glyph serif">T</text></svg></button>
    <button aria-label="Image"><svg viewBox="0 0 24 24"><path d="M0 8l6-1 3-5h6l3 5 6 1v14H0z" fill="#484848"/><path d="M19 4h4v3h-4z" fill="#dd0"/><circle cx="12" cy="13" r="7" fill="#ddd" stroke="#777" stroke-width="2"/><circle cx="12" cy="13" r="3" fill="#f11"/><path d="M0 22h24" stroke="#1a9c1a" stroke-width="2"/></svg></button>
    <button aria-label="Delete"><svg viewBox="0 0 24 24"><path d="M3 5c1-4 5-2 7-4 4-1 7 0 9 4z" fill="#fafafa" stroke="#bbb"/><path d="M2 8h20M4 9l3 14h10l3-14M5 13h14M6 17h12M6 20h12M9 9l1 14M12 9v14M15 9l-1 14" fill="none" stroke="#333"/></svg></button>
  </div>
</main>

<section class="infobar" aria-label="Selection">
  <div class="kind"><p>Graphic Text</p><p>Main MCU</p></div>
  <div class="orient"><p>Orientation</p><p>Horizontal</p></div>
  <div class="style"><p>Style</p><p>Normal</p></div>
  <div class="size"><p>Size</p><p>1.270 mm</p></div>
</section>
<footer class="status">
  <span class="st-fill"></span><span class="st-zoom">Z 2.42</span><span class="st-pos">X -119.40&nbsp; Y 110.50</span><span class="st-delta">dx -119.40&nbsp; dy 110.50&nbsp; dist 162.69</span><span class="st-unit">mm</span><span class="st-end"></span>
</footer>

<div class="taskbar">
  <button class="start" aria-label="Start"><svg viewBox="0 0 16 16"><path d="M0 2l7-1v7H0zM8 1l8-1v8H8zM0 9h7v6l-7-1zM8 9h8v7l-8-1z" fill="#fff"/></svg></button>
  <label class="search"><svg viewBox="0 0 18 18"><circle cx="11" cy="7" r="5" fill="none" stroke="#222" stroke-width="1.500"/><path d="M7 11l-5 6" stroke="#222" stroke-width="1.500"/></svg><input type="text" placeholder="Escreva aqui para procurar" aria-label="Search"></label>
  <button class="task" aria-label="Cortana"><svg viewBox="0 0 24 24"><circle cx="12" cy="12" r="7" fill="none" stroke="#fff" stroke-width="2"/></svg></button>
  <button class="task" aria-label="Task view"><svg viewBox="0 0 24 24"><path d="M3 4v3h10V4M3 20v-3h10v3M3 9h10v6H3zM17 4v16" fill="none" stroke="#fff"/><path d="M16 9h3v3h-3z" fill="#fff"/></svg></button>
  <button class="task run" aria-label="Chrome"><svg viewBox="0 0 24 24"><path d="M12 12L2.500 6.500A11 11 0 0 1 21.500 6.500H12z" fill="#ea4335"/><path d="M12 12l-9.500-5.500A11 11 0 0 0 12 23l4.800-8.300z" fill="#34a853"/><path d="M12 6.500h9.500A11 11 0 0 1 12 23l4.800-8.300z" fill="#fbbc05"/><circle cx="12" cy="12" r="5.500" fill="#fff"/><circle cx="12" cy="12" r="4" fill="#4285f4"/></svg></button>
  <button class="task run" aria-label="Explorer"><svg viewBox="0 0 24 24"><path d="M1 3h8l2 3h12v15H1z" fill="#e5a50a"/><path d="M1 8h22v13H1z" fill="#ffd76a"/><path d="M5 13h14v8h-4v-4H9v4H5z" fill="#2f8fe0"/></svg></button>
  <button class="task" aria-label="Opera"><svg viewBox="0 0 24 24"><ellipse cx="12" cy="12" rx="11" ry="11" fill="#e81224"/><ellipse cx="12" cy="12" rx="5" ry="8" fill="#22221d"/></svg></button>
  <button class="task run" aria-label="Thunderbird, 2 new"><svg viewBox="0 0 24 24"><circle cx="12" cy="11" r="11" fill="#1f6fc4"/><path d="M2 13l10-6 9 5-6 8H6z" fill="#e8f0f8"/><path d="M3 5c6-5 14-4 18 4-5-4-10-4-13 0z" fill="#0d3f7a"/><circle cx="17" cy="17" r="7" fill="#f0143c"/><text x="17" y="21" class="badge">2</text></svg></button>
  <button class="task run active" aria-label="Eeschema"><svg viewBox="0 0 24 24"><path d="M1 0h15l7 7v17H1z" fill="#fff8e4" stroke="#d2ab2c" stroke-width="2"/><path d="M15 0h8v8z" fill="#d2ab2c"/><path d="M6 4v8h5M11 7v14M11 10h5M11 17h8M6 19h5M15 14v6M19 14v6M4 12h4" fill="none" stroke="#b5763a" stroke-width="1.500"/></svg></button>
  <button class="task run" aria-label="Acrobat"><svg viewBox="0 0 24 24"><rect x="1" y="1" width="22" height="22" rx="4" fill="#b30b00"/><path d="M6 18c4-2 6-7 6-11 0-2-2-2-1 1 1 4 4 7 8 7-4-2-9 0-13 3z" fill="none" stroke="#fff" stroke-width="1.500"/></svg></button>
  <button class="task run" aria-label="Writer"><svg viewBox="0 0 24 24"><path d="M4 1h18v23H4z" fill="#34679a" stroke="#5d87ae"/><path d="M9 11h10M9 15h10M9 19h10" stroke="#b7cde0" stroke-width="1.500"/><path d="M1 8c5-2 5-5 9-6 3 0 6-1 8-2-1 5-6 5-8 5-3 0-5 4-9 3z" fill="#e8eef4"/></svg></button>
  <div class="tray">
    <button aria-label="Hidden icons"><svg viewBox="0 0 18 18"><path d="M3 12l6-6 6 6" fill="none" stroke="#fff" stroke-width="1.500"/></svg></button>
    <button aria-label="Meet now"><svg viewBox="0 0 18 18"><path d="M4 6h6v7H4zM10 9l4-2v5l-4-2M5 3c2-2 5-2 7 0M5 16c2 2 5 2 7 0" fill="none" stroke="#fff"/></svg></button>
    <button aria-label="Network"><svg viewBox="0 0 18 18"><path d="M5 4h12v9H5zM11 13v3M7 16h8M1 3h4v5H1zM3 8v5" fill="none" stroke="#fff"/></svg></button>
    <button aria-label="OneDrive"><svg viewBox="0 0 18 18"><path d="M3 14a4 4 0 0 1 1-7c1-4 7-4 8 0 5 0 6 6 2 7z" fill="#ddd"/><path d="M5 14c-1-4 3-5 4-3 4-3 7-1 8 1 0 1-1 2-3 2z" fill="#fff"/></svg></button>
    <button aria-label="Volume"><svg viewBox="0 0 18 18"><path d="M1 7h3l4-4v12l-4-4H1zM10 7c1 1 1 3 0 4M12 5c2 2 2 6 0 8M14 3c4 4 4 8 0 12" fill="none" stroke="#fff"/></svg></button>
    <button class="clock"><span>19:02</span><span>24/04/2022</span></button>
    <button class="notify" aria-label="Notifications, 1 new"><svg viewBox="0 0 28 28"><path d="M2 3h16v14h-9l-4 4v-4H2z" fill="#fff"/><path d="M5 7h10M5 10h10M5 13h8" stroke="#222"/><circle cx="18" cy="18" r="8" fill="#333" stroke="#999"/><text x="18" y="22" class="badge">1</text></svg></button>
  </div>
</div>
</body>
</html>
```
FILE: styles.css
```
* { box-sizing: border-box; }

body {
  margin: 0;
  height: 100vh;
  display: flex;
  flex-direction: column;
  overflow: hidden;
  background: #f0f0f0;
  color: #000;
  font: 12px/16px "Open Sans", "Noto Sans", sans-serif;
}

button {
  margin: 0;
  padding: 0;
  border: 0;
  background: none;
  color: inherit;
  font: inherit;
}

svg { display: block; }

/* Title and menus */
.titlebar {
  display: flex;
  align-items: center;
  height: 24px;
  background: #fff;
}
.app-icon { width: 16px; height: 16px; margin: 0 4px 0 3px; }
.title { margin: 0; flex: 1; font: 400 11px/16px "Noto Sans", sans-serif; white-space: nowrap; }
.window-controls { display: flex; align-self: flex-start; margin-right: 4px; }
.window-controls button { width: 45px; height: 20px; display: grid; place-items: center; }
.window-controls svg { width: 12px; height: 12px; }

.menubar {
  display: flex;
  gap: 14px;
  height: 19px;
  padding-left: 7px;
  background: #fff;
  border-bottom: 2px solid #f0f0f0;
  font: 11px/16px "Noto Sans", sans-serif;
}

/* Main toolbar */
.toolbar {
  display: flex;
  height: 39px;
  padding-left: 5px;
  border-bottom: 2px solid #a0a0a0;
}
.toolbar button { width: 34px; display: grid; place-items: center; }
.toolbar svg { width: 24px; height: 24px; overflow: visible; }
.sep { width: 9px; display: grid; place-items: center; }
.sep::before { content: ""; width: 1px; height: 25px; background: #b4b4b4; }

.net-label, .dollar, .back-label, .badge, .unit, .glyph { text-anchor: middle; font-family: Roboto, sans-serif; }
.net-label { font-size: 10px; font-weight: 500; fill: #fff; }
.dollar { font-size: 9px; fill: #333; }
.back-label { font-size: 10px; font-weight: 500; fill: #333; }
.badge { font-size: 11px; fill: #fff; }
.unit { font-size: 15px; font-weight: 500; fill: #444; }
.glyph { font-size: 15px; }
.glyph.big { font-size: 20px; }
.glyph.narrow { font-size: 12px; }
.glyph.serif { font: 700 27px "Liberation Serif", serif; fill: #333; }

/* Work area */
.workspace { flex: 1; min-height: 0; display: flex; background: #a0a0a0; }
.side {
  display: flex;
  flex-direction: column;
  align-items: center;
  gap: 2px;
  padding-top: 5px;
  background: #f0f0f0;
}
.side-left { width: 37px; border-left: 1px solid #fff; }
.side-right { width: 38px; border-left: 1px solid #fff; border-right: 1px solid #a0a0a0; }
.side button { width: 32px; height: 32px; display: grid; place-items: center; border: 1px solid transparent; }
.side .on { background: #b3d5f2; border-color: #0078d7; }
.side svg { width: 24px; height: 24px; overflow: visible; }

.frame { flex: 1; min-width: 0; padding: 0 1px 2px 2px; }
.view {
  height: 100%;
  display: grid;
  grid-template: minmax(0, 1fr) 15px / minmax(0, 1fr) 16px;
  border: 1px solid #646464;
  background: #f0f0f0;
}
.schematic { width: 100%; height: 100%; background: #fff; }

.vscroll { display: flex; flex-direction: column; padding-right: 1px; }
.vscroll button { height: 17px; }
.vscroll button:first-child { border-bottom: 1px solid #d0d0d0; }
.vthumb { flex: 583; background: #cdcdcd; }
.vtrack { flex: 626; }
.hscroll { display: flex; }
.hscroll button { width: 16px; }
.hthumb { flex: 687; background: #cdcdcd; }
.htrack { flex: 1745; }
.vscroll svg, .hscroll svg { width: 15px; height: 15px; }

/* Schematic ink */
.schematic path, .schematic rect { shape-rendering: crispEdges; }
.sheet { stroke: #000; fill: none; }
.wire { stroke: #008400; fill: none; }
.pin { stroke: #840000; fill: none; }
.body { stroke: #840000; stroke-width: 2; fill: none; }
.plate { stroke: #840000; stroke-width: 4; }
.chip { stroke: #840000; fill: #ffffc2; }
.heavy { stroke-width: 2; }
.shaft { stroke: #840000; stroke-width: 2; }
.head { fill: #840000; }
.dot { fill: #008400; }
.mark { stroke: #008484; }
.dashed { fill: none; stroke: #0000c2; stroke-dasharray: 5 2; }
.schematic text { font-family: "DejaVu Sans Light", "DejaVu Sans", sans-serif; font-weight: 200; stroke: none; }
.f { font-size: 15px; fill: #006c6c; text-anchor: middle; }
.f .s, .f.s { text-anchor: start; }
.f .e { text-anchor: end; }
.n { font-size: 15px; fill: #700000; text-anchor: middle; }
.note { font-size: 17px; fill: #0000a0; }
.note.small { font-size: 16px; }

/* Selection details */
.infobar {
  display: flex;
  height: 33px;
  padding-left: 11px;
  border: 1px solid #a0a0a0;
  border-width: 2px 1px 1px;
  font-size: 11px;
  line-height: 14px;
}
.infobar p { margin: 0; }
.kind { width: 282px; color: #004848; }
.orient { width: 89px; color: #848400; }
.style { width: 69px; color: #848400; }
.size { color: #840000; }

.status { display: flex; height: 22px; padding: 1px 0; font-size: 11px; line-height: 20px; }
.status span { padding-left: 4px; border-left: 1px solid #d7d7d7; }
.status .st-fill { flex: 1; border: 0; }
.st-zoom { width: 66px; }
.st-pos { width: 172px; }
.st-delta { width: 263px; }
.st-unit { width: 54px; }
.st-end { width: 180px; }

/* Taskbar */
.taskbar {
  display: flex;
  height: 40px;
  background: linear-gradient(90deg, #20211c 0, #20211c 32%, #33281f 50%, #3b2c23 75%, #33271e 90%, #20261d 97%);
  color: #fff;
}
.start { width: 48px; display: grid; place-items: center; }
.start svg { width: 16px; height: 16px; }
.search {
  width: 344px;
  display: flex;
  align-items: center;
  gap: 10px;
  padding-left: 12px;
  background: #f2f2f2;
  border: 1px solid #bbb;
}
.search svg { width: 18px; height: 18px; }
.search input { flex: 1; min-width: 0; padding: 0; border: 0; background: none; font: 14px/20px "Open Sans", sans-serif; }
.search input::placeholder { color: #333; opacity: 1; }
.task { width: 49px; display: grid; place-items: center; position: relative; }
.task svg { width: 24px; height: 24px; }
.task.run::after { content: ""; position: absolute; left: 5px; right: 4px; bottom: 0; height: 2px; background: #76b9ed; }
.task.active { background: #50504b; }
.task.active::after { left: 0; right: 0; }
.tray { display: flex; margin-left: auto; padding-right: 6px; }
.tray button { width: 24px; display: grid; place-items: center; }
.tray svg { width: 18px; height: 18px; }
.tray .clock { width: 70px; align-content: center; row-gap: 2px; font-size: 11px; }
.tray .notify { width: 47px; }
.tray .notify svg { width: 28px; height: 28px; }
```
